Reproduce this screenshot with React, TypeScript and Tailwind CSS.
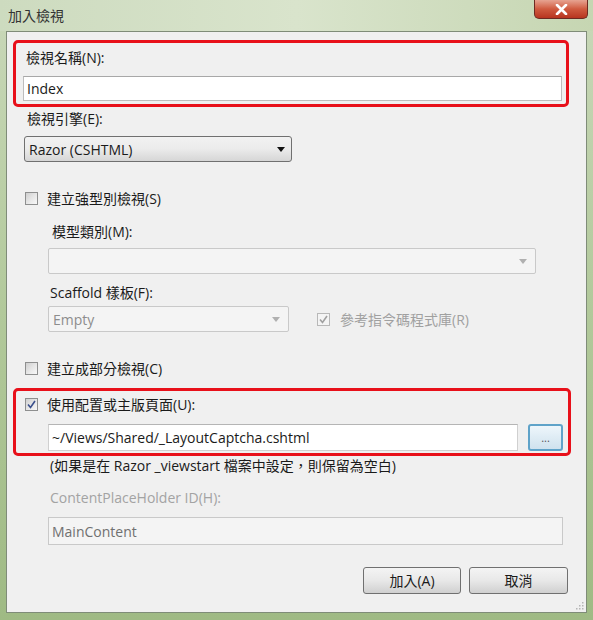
import React from "react";

const font = "font-['Open_Sans','Noto_Sans_CJK_TC',sans-serif]";

const Check = ({ checked, disabled }: { checked?: boolean; disabled?: boolean }) => (
  <span
    className={`flex h-[13px] w-[13px] shrink-0 items-center justify-center border ${
      disabled ? "border-[#b8b8b8] bg-[#f4f4f4]" : "border-[#8e8f8f] bg-gradient-to-br from-[#cfcfcf] via-[#e6e6e6] to-[#f8f8f8]"
    }`}
  >
    {checked && (
      <svg width="9" height="9" viewBox="0 0 9 9">
        <path
          d="M1 4.5 L3.5 7.5 L8 1"
          fill="none"
          stroke={disabled ? "#a0a0a0" : "#3a4f8c"}
          strokeWidth="1.6"
        />
      </svg>
    )}
  </span>
);

const Arrow = ({ color }: { color: string }) => (
  <svg width="8" height="5" viewBox="0 0 8 5">
    <path d="M0 0 H8 L4 5 Z" fill={color} />
  </svg>
);

export default function App() {
  return (
    <div className={`${font} h-[620px] w-[593px] overflow-hidden bg-gradient-to-b from-[#c9d8b9] via-[#b2c99b] to-[#9fba84] text-[14px] text-[#1a1a1a]`}>
      {/* title bar */}
      <div className="flex h-[31px] items-start justify-between bg-gradient-to-r from-[#cddbbf] via-[#d9e4cc] to-[#c6d6b2]">
        <span className="ml-[8px] mt-[5px] text-[14px] text-[#333]">加入檢視</span>
        <div className="mr-[5px] flex h-[19px] w-[54px] items-center justify-center rounded-b-[5px] border border-t-0 border-[#6d2a22] bg-gradient-to-b from-[#e6a391] via-[#cf5a3f] to-[#b7341f]">
          <svg width="13" height="11" viewBox="0 0 13 11">
            <path d="M2 1 L11 10 M11 1 L2 10" stroke="#ffffff" strokeWidth="2.6" strokeLinecap="round" />
          </svg>
        </div>
      </div>

      {/* content panel */}
      <div className="ml-[6px] flex h-[582px] w-[581px] flex-col border border-[#7f8c78] bg-[#f0f0f0]">
        {/* view name */}
        <div className="ml-[6px] mt-[8px] flex h-[67px] w-[556px] flex-col rounded-[5px] border-[3px] border-[#e8101a] pb-[3px] pt-[5px]">
          <span className="ml-[10px] leading-[20px]">檢視名稱(N):</span>
          <div className="ml-[7px] mt-[8px] flex h-[25px] w-[539px] items-center border border-[#bdbdbd] border-t-[#a8a8a8] bg-white pl-[3px]">
            Index
          </div>
        </div>

        <span className="ml-[20px] mt-[2px] leading-[20px]">檢視引擎(E):</span>
        <div className="ml-[17px] mt-[7px] flex h-[26px] w-[268px] items-center justify-between rounded-[3px] border border-[#707070] bg-gradient-to-b from-[#f2f2f2] via-[#ebebeb] to-[#d6d6d6] pl-[4px] pr-[6px]">
          <span>Razor (CSHTML)</span>
          <Arrow color="#111" />
        </div>

        <div className="ml-[18px] mt-[28px] flex h-[16px] items-center gap-[9px]">
          <Check />
          <span>建立強型別檢視(S)</span>
        </div>

        <span className="ml-[45px] mt-[16px] leading-[20px]">模型類別(M):</span>
        <div className="ml-[41px] mt-[6px] flex h-[26px] w-[488px] items-center justify-end rounded-[2px] border border-[#c9c9c9] bg-[#f4f4f4] pr-[8px]">
          <Arrow color="#b0b0b0" />
        </div>

        <span className="ml-[43px] mt-[9px] leading-[20px]">Scaffold 樣板(F):</span>
        <div className="ml-[41px] mt-[3px] flex items-center">
          <div className="flex h-[26px] w-[241px] items-center justify-between rounded-[2px] border border-[#c9c9c9] bg-[#f4f4f4] pl-[4px] pr-[8px] text-[#8d8d8d]">
            <span>Empty</span>
            <Arrow color="#b0b0b0" />
          </div>
          <div className="ml-[28px] flex items-center gap-[10px] text-[#a0a0a0]">
            <Check checked disabled />
            <span>參考指令碼程式庫(R)</span>
          </div>
        </div>

        <div className="ml-[18px] mt-[28px] flex h-[16px] items-center gap-[9px]">
          <Check />
          <span>建立成部分檢視(C)</span>
        </div>

        {/* layout page */}
        <div className="ml-[6px] mt-[12px] flex h-[68px] w-[558px] flex-col rounded-[5px] border-[3px] border-[#e8101a] pb-[2px] pt-[5px]">
          <div className="ml-[9px] flex h-[16px] items-center gap-[9px]">
            <Check checked />
            <span>使用配置或主版頁面(U):</span>
          </div>
          <div className="ml-[32px] mt-[12px] flex items-center gap-[10px]">
            <div className="flex h-[27px] w-[470px] items-center border border-[#d0d0d0] border-t-[#b5b5b5] bg-white pl-[3px]">
              ~/Views/Shared/_LayoutCaptcha.cshtml
            </div>
            <div className="flex h-[27px] w-[35px] items-center justify-center rounded-[3px] border-2 border-[#5fa3c9] bg-gradient-to-b from-[#eef6fb] to-[#cfe2ee] text-[11px] leading-none text-[#555]">
              ...
            </div>
          </div>
        </div>

        <span className="ml-[43px] mt-[1px] leading-[18px]">(如果是在 Razor _viewstart 檔案中設定，則保留為空白)</span>
        <span className="ml-[43px] mt-[13px] leading-[20px] text-[#a3a3a3]">ContentPlaceHolder ID(H):</span>
        <div className="ml-[41px] mt-[9px] flex h-[28px] w-[515px] items-center border border-[#c9c9c9] bg-[#f4f4f4] pl-[3px] text-[#707070]">
          MainContent
        </div>

        <div className="mr-[18px] mt-[22px] flex justify-end gap-[8px]">
          <div className="flex h-[27px] w-[98px] items-center justify-center rounded-[3px] border border-[#707070] bg-gradient-to-b from-[#f4f4f4] via-[#e8e8e8] to-[#d0d0d0]">
            加入(A)
          </div>
          <div className="flex h-[27px] w-[99px] items-center justify-center rounded-[3px] border border-[#707070] bg-gradient-to-b from-[#f4f4f4] via-[#e8e8e8] to-[#d0d0d0]">
            取消
          </div>
        </div>

        <div className="mr-[2px] mt-auto mb-[2px] flex justify-end">
          <svg width="10" height="10" viewBox="0 0 10 10" fill="#b5b5b5">
            <rect x="8" y="2" width="1.5" height="1.5" />
            <rect x="5" y="5" width="1.5" height="1.5" />
            <rect x="8" y="5" width="1.5" height="1.5" />
            <rect x="2" y="8" width="1.5" height="1.5" />
            <rect x="5" y="8" width="1.5" height="1.5" />
            <rect x="8" y="8" width="1.5" height="1.5" />
          </svg>
        </div>
      </div>
    </div>
  );
}
